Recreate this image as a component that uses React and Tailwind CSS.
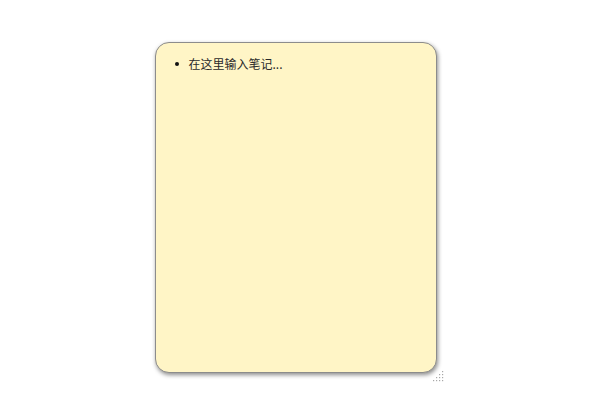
import React from "react";

function ResizeGrip() {
  // triangular dotted grip, bottom-right outside the note
  const dots = [];
  for (let row = 0; row < 4; row++) {
    for (let col = 3 - row; col < 4; col++) {
      dots.push([col * 3, row * 3]);
    }
  }
  return (
    <svg width="11" height="11" viewBox="0 0 11 11" className="absolute right-[-7px] bottom-[-9px]">
      {dots.map(([x, y], i) => (
        <rect key={i} x={x} y={y} width="1.2" height="1.2" fill="#a8a8a8" />
      ))}
    </svg>
  );
}

export default function App() {
  return (
    <div className="w-[608px] h-[414px] bg-white pl-[155px] pt-[42px] font-['Microsoft_YaHei','Noto_Sans_CJK_SC',sans-serif]">
      <div className="relative w-[282px] h-[331px]">
        <div className="w-full h-full rounded-[14px] border border-[#8c8c8c] bg-[#fff5c6] shadow-[1px_2px_4px_rgba(0,0,0,0.45)] pl-[19px] pt-[12px]">
          <div className="flex items-center gap-[10px] text-[12px] leading-[18px] text-[#2a2a2a]">
            <span className="w-[3.5px] h-[3.5px] rounded-full bg-[#111]" />
            <span>在这里输入笔记...</span>
          </div>
        </div>
        <ResizeGrip />
      </div>
    </div>
  );
}
